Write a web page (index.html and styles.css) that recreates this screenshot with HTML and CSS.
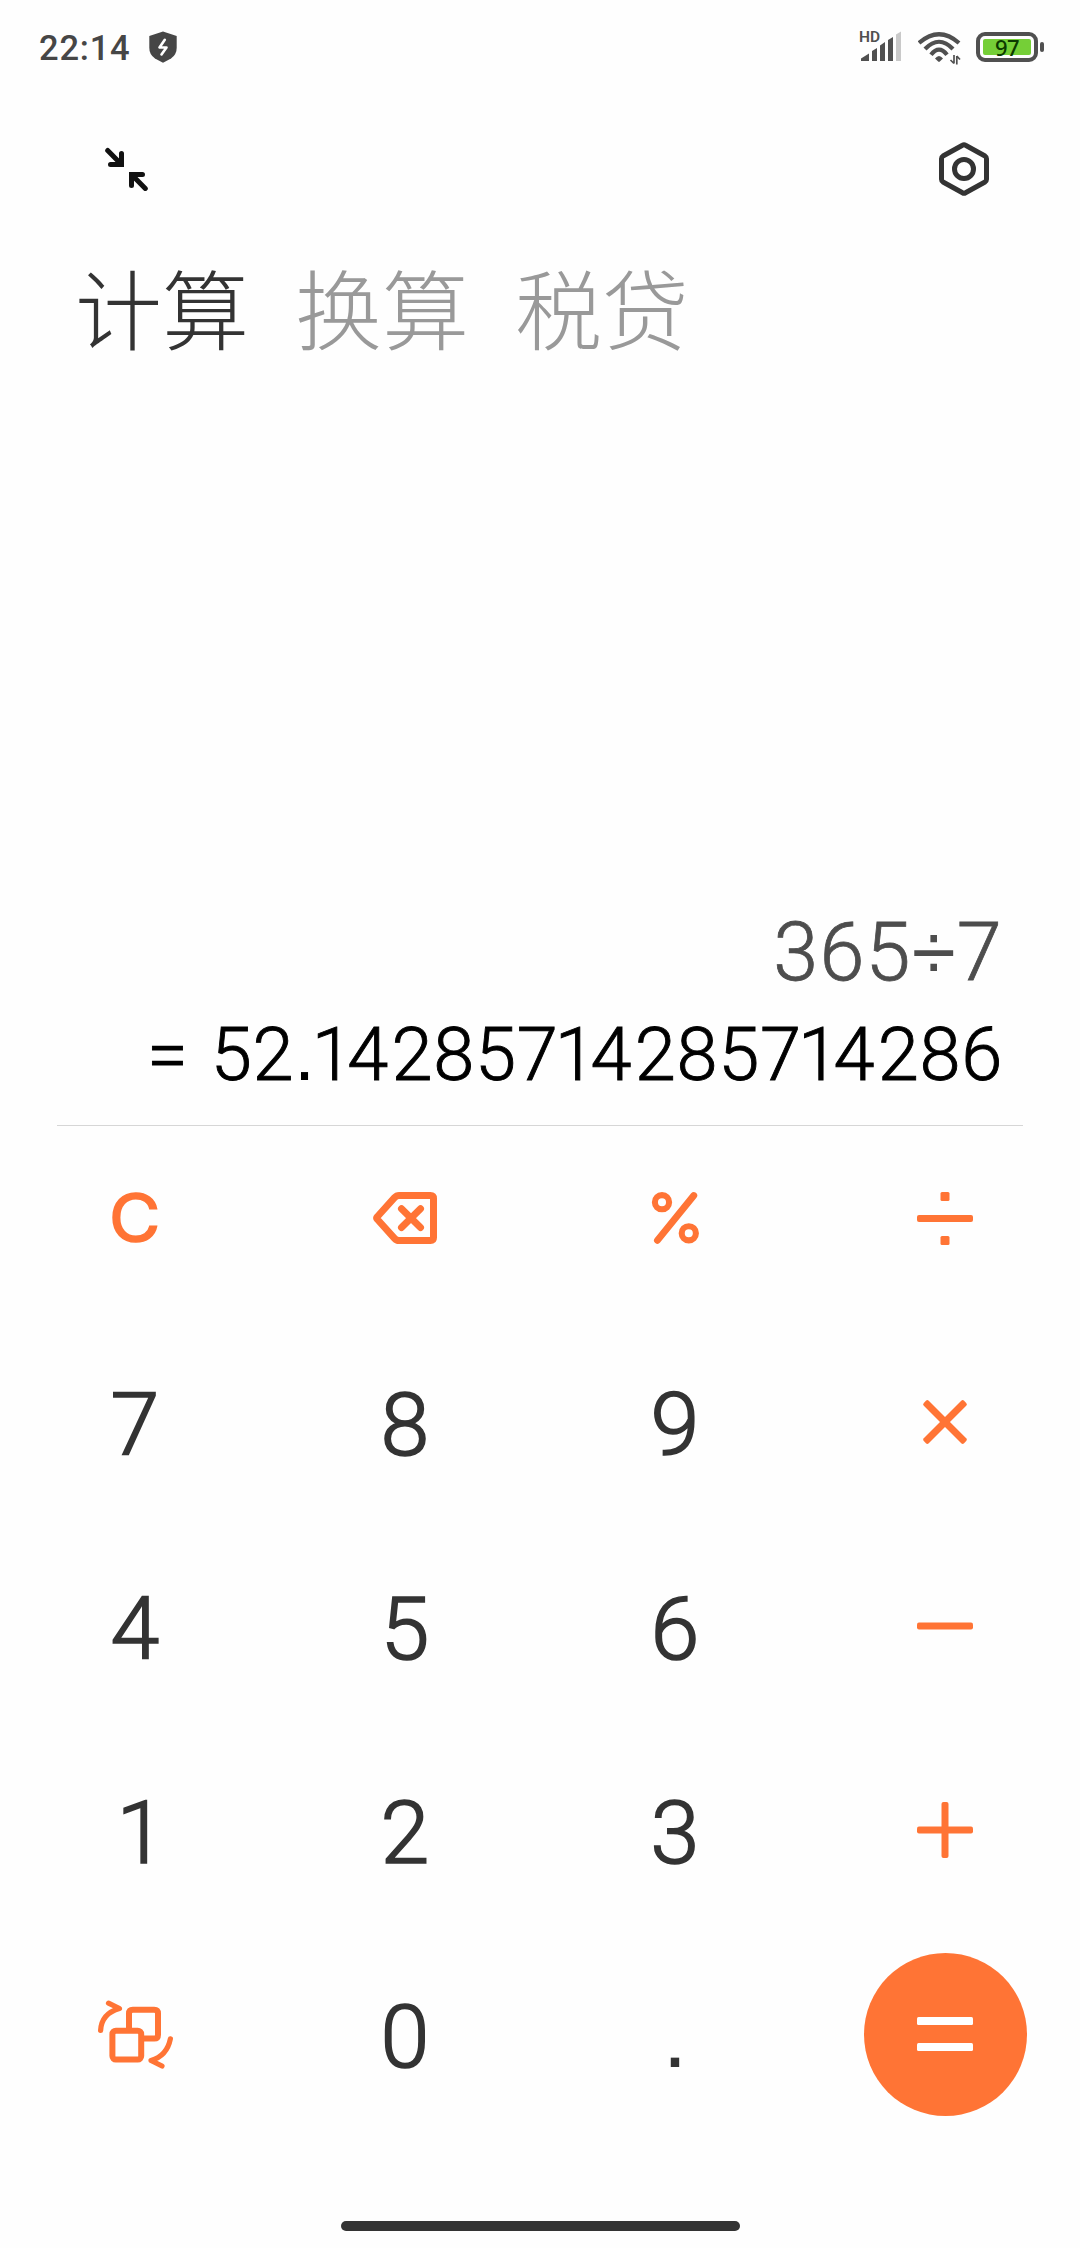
FILE: index.html
```html
<!DOCTYPE html>
<html lang="zh-CN">
<head>
<meta charset="utf-8">
<title>计算器</title>
<link rel="stylesheet" href="styles.css">
</head>
<body>
<div class="screen">
  <header class="status">
    <div class="status-left">
      <span class="clock">22:14</span>
      <svg class="shield" width="28" height="32" viewBox="149 31 28 32">
        <path d="M163 31.5 L176.7 36 V48 Q176.7 54.5 171 58.5 L163 62.7 L155 58.5 Q149.3 54.5 149.3 48 V36 Z" fill="#464646"/>
        <path d="M164.8 39.8 L159.5 47.5 H166.5 L161.5 54.5" fill="none" stroke="#fff" stroke-width="2.6" stroke-linejoin="round" stroke-linecap="round"/>
      </svg>
    </div>
    <div class="status-right">
      <div class="signal">
        <span class="hd">HD</span>
        <svg width="42" height="31" viewBox="861 31 42 31">
          <path d="M862 61 V58.5 L870 53.5 V61Z M873 61 V51 L878 48 V61Z M881 61 V45.5 L886 42 V61Z M889 61 V40 L894 37 V61Z" fill="#505050"/>
          <path d="M897 61 V34.5 L902 31.5 V61Z" fill="#c9c9c9"/>
        </svg>
      </div>
      <svg class="wifi" width="43" height="34" viewBox="918 31 43 34">
        <g fill="none" stroke="#505050" stroke-width="4.2">
          <path d="M919 43 Q939 25.5 959 43"/>
          <path d="M925 49 Q939 34.5 953 49"/>
          <path d="M931 54.7 Q939 44.5 947 54.7"/>
        </g>
        <path d="M935 58.5 Q939 53.5 943 58.5 L939.8 61.6 Q939 62.2 938.2 61.6Z" fill="#505050"/>
        <path d="M954 55 V63.5 M954 63.5 L950.5 60 M956.8 64.5 V56 M956.8 56 L960 59.5" fill="none" stroke="#505050" stroke-width="1.7"/>
      </svg>
      <div class="battery"><span class="level">97</span></div>
      <i class="nub"></i>
    </div>
  </header>

  <div class="toolbar">
    <svg width="44" height="44" viewBox="104 146 44 44" fill="none" stroke="#111" stroke-width="5" stroke-linecap="round">
      <path d="M107.7 149.5 L121 163 M121.5 152.5 V163.5 H110.5"/>
      <path d="M145.3 187.5 L132 174 M131.5 184.5 V173.5 H142.5"/>
    </svg>
    <svg width="54" height="58" viewBox="937 140 54 58" fill="none" stroke="#333" stroke-width="5" stroke-linejoin="round">
      <path d="M962.5 145.2 Q964 144.3 965.5 145.2 L985 156 Q986.5 157 986.5 158.7 V179.3 Q986.5 181 985 182 L965.5 192.8 Q964 193.7 962.5 192.8 L943 182 Q941.5 181 941.5 179.3 V158.7 Q941.5 157 943 156 Z"/>
      <circle cx="964" cy="169" r="9.5"/>
    </svg>
  </div>

  <nav class="tabs">
    <span class="tab active">计算</span>
    <span class="tab">换算</span>
    <span class="tab">税贷</span>
  </nav>

  <section class="display">
    <div class="expression">365<span class="divide">÷</span>7</div>
    <div class="result"><span class="sign">= </span>52<span class="point">.</span><span class="one">1</span><span class="four">4</span>285<span class="seven">7</span><span class="one">1</span><span class="four">4</span>285<span class="seven">7</span><span class="one">1</span><span class="four">4</span>286</div>
  </section>

  <main class="keypad">
    <div class="key clear"><span class="clear-label">C</span></div>
    <div class="key">
      <svg class="backspace" width="66" height="54" viewBox="372 1191 66 54" fill="none" stroke="#ff7435" stroke-width="7" stroke-linejoin="round" stroke-linecap="round">
        <path d="M399 1195.5 H430.5 Q433.5 1195.5 433.5 1198.5 V1237.5 Q433.5 1240.5 430.5 1240.5 H399 Q396.5 1240.5 394.5 1238.3 L377.5 1219.5 Q376 1218 377.5 1216.5 L394.5 1197.7 Q396.5 1195.5 399 1195.5Z"/>
        <path d="M401.5 1208.7 L420.5 1227.5 M420.5 1208.7 L401.5 1227.5"/>
      </svg>
    </div>
    <div class="key">
      <svg width="50" height="54" viewBox="650 1191 50 54" fill="none" stroke="#ff7435">
        <circle cx="662" cy="1202.2" r="7.1" stroke-width="6.1"/>
        <circle cx="688.8" cy="1233.3" r="7.1" stroke-width="6.1"/>
        <path d="M693.8 1195.5 L657.4 1240.3" stroke-width="6.8" stroke-linecap="round"/>
      </svg>
    </div>
    <div class="key">
      <svg width="56" height="56" viewBox="0 0 56 56" fill="#ff7435">
        <rect x="23.5" y="2" width="9" height="9" rx="1.5"/>
        <rect x="0" y="25" width="56" height="7" rx="2"/>
        <rect x="23.5" y="46" width="9" height="9" rx="1.5"/>
      </svg>
    </div>

    <div class="key digit">7</div>
    <div class="key digit">8</div>
    <div class="key digit">9</div>
    <div class="key">
      <svg width="56" height="56" viewBox="-28 -28 56 56" fill="#ff7435">
        <rect x="-28.5" y="-3.5" width="57" height="7" rx="2" transform="rotate(45)"/>
        <rect x="-28.5" y="-3.5" width="57" height="7" rx="2" transform="rotate(-45)"/>
      </svg>
    </div>

    <div class="key digit">4</div>
    <div class="key digit">5</div>
    <div class="key digit">6</div>
    <div class="key">
      <svg width="56" height="56" viewBox="0 0 56 56" fill="#ff7435"><rect x="0" y="24.5" width="56" height="7" rx="2"/></svg>
    </div>

    <div class="key digit narrow">1</div>
    <div class="key digit">2</div>
    <div class="key digit">3</div>
    <div class="key">
      <svg width="56" height="56" viewBox="0 0 56 56" fill="#ff7435">
        <rect x="0" y="24.5" width="56" height="7" rx="2"/>
        <rect x="24.5" y="0" width="7" height="56" rx="2"/>
      </svg>
    </div>

    <div class="key">
      <svg width="80" height="72" viewBox="95 1998 80 72" fill="none" stroke="#ff7435" stroke-width="6" stroke-linecap="round" stroke-linejoin="round">
        <rect x="112.4" y="2030.7" width="28.8" height="28.9" rx="3.5"/>
        <path d="M129 2029 V2013.5 Q129 2009.7 132.8 2009.7 H154.2 Q158 2009.7 158 2013.5 V2034.7 Q158 2038.6 154.2 2038.6 H143"/>
        <path stroke-width="5.2" d="M100.6 2030.5 Q101.5 2013.5 119.5 2008.5 L108.5 2003.2"/>
        <path stroke-width="5.2" d="M170.4 2038.8 Q167 2056 151 2060.5 L162 2066"/>
      </svg>
    </div>
    <div class="key digit">0</div>
    <div class="key digit"><span class="point">.</span></div>
    <div class="key">
      <div class="equals">
        <svg width="56" height="56" viewBox="0 0 56 56" fill="#fff">
          <rect x="0" y="11" width="56" height="8" rx="1.5"/>
          <rect x="0" y="37" width="56" height="8" rx="1.5"/>
        </svg>
      </div>
    </div>
  </main>

  <footer class="gesture"><i class="pill"></i></footer>
</div>
</body>
</html>
```
FILE: styles.css
```css
* { box-sizing: border-box; }

body {
  margin: 0;
  background: #fefefe;
  font-family: Roboto, "Noto Sans CJK SC", sans-serif;
  color: #333;
}

svg { display: block; flex: none; }

.screen {
  width: 1080px;
  height: 2248px;
  display: flex;
  flex-direction: column;
  overflow: hidden;
}

.status {
  height: 94px;
  display: flex;
  justify-content: space-between;
  align-items: center;
  padding: 0 36px 0 39px;
}

.status-left, .status-right { display: flex; align-items: center; }

.clock {
  width: 110px;
  font-size: 34.5px;
  line-height: 40px;
  font-weight: 500;
  letter-spacing: .8px;
  color: #464646;
  padding-top: 2px;
}

.signal { position: relative; margin: 0 16px 2px 0; }

.hd {
  position: absolute;
  left: -1px;
  top: -3px;
  font-size: 15.5px;
  line-height: 18px;
  font-weight: 600;
  color: #505050;
}

.wifi { margin: 2px 15px 0 0; }

.battery {
  width: 62px;
  height: 30px;
  border: 4px solid #505050;
  border-radius: 9px;
  padding: 3px;
  display: flex;
}

.level {
  flex: 1;
  background: #75cf37;
  border-radius: 2px;
  color: #0c3a00;
  font: 500 22px/17px "Noto Sans", sans-serif;
  letter-spacing: -.5px;
  text-align: center;
}

.nub {
  width: 4px;
  height: 10px;
  margin-left: 2px;
  border-radius: 2px;
  background: #505050;
}

.toolbar {
  height: 150px;
  display: flex;
  justify-content: space-between;
  align-items: center;
  padding: 0 89px 0 104px;
}

.tabs {
  display: flex;
  gap: 46px;
  height: 124px;
  padding-left: 75px;
  align-items: center;
}

.tab {
  width: 174px;
  font: 300 87px/124px "Noto Sans CJK SC", sans-serif;
  color: #999;
  white-space: nowrap;
}

.tab.active { color: #333; }

.display {
  flex: 1;
  margin: 0 57px;
  padding: 0 20px 18px 0;
  display: flex;
  flex-direction: column;
  justify-content: flex-end;
  align-items: flex-end;
  border-bottom: 1px solid #d6d6d6;
  white-space: nowrap;
}

.expression {
  font-size: 81px;
  line-height: 100px;
  font-weight: 300;
  letter-spacing: 1.2px;
  color: #4d4d4d;
  -webkit-text-stroke: .8px #4d4d4d;
}

.divide {
  font: 400 80px/1 "Liberation Sans", sans-serif;
  -webkit-text-stroke: 0;
}

.result {
  font-size: 74px;
  line-height: 104px;
  font-weight: 300;
  letter-spacing: .7px;
  color: #000;
  -webkit-text-stroke: .9px #000;
}

.sign { letter-spacing: 2.4px; }

/* The figure 1 sits tighter than its tabular cell, the 4 a little wider. */
.seven { letter-spacing: -3px; }
.one { letter-spacing: -5.5px; }
.four { letter-spacing: 3.2px; }

.point {
  font-family: "Liberation Sans", sans-serif;
  font-weight: 400;
  line-height: 1;
  -webkit-text-stroke: 0;
}

.result .point { letter-spacing: -3px; }

.keypad {
  height: 1000px;
  display: grid;
  grid-template-columns: repeat(4, 270px);
  grid-template-rows: repeat(5, 184px);
  row-gap: 20px;
}

.key {
  display: flex;
  align-items: center;
  justify-content: center;
}

.digit {
  padding-top: 6px;
  font-size: 88px;
  line-height: 178px;
  font-weight: 300;
  -webkit-text-stroke: 1.7px #333;
}

.digit .point { line-height: 178px; }

.narrow { padding-left: 12px; }

.clear {
  font: 400 65px/184px Inter, sans-serif;
  color: #ff7435;
  -webkit-text-stroke: 1.6px #ff7435;
}

.clear-label { transform: scaleX(1.08); }

.equals {
  width: 163px;
  height: 163px;
  border-radius: 50%;
  background: #ff7435;
  display: flex;
  align-items: center;
  justify-content: center;
}

.gesture {
  height: 122px;
  display: flex;
  justify-content: center;
  align-items: flex-end;
  padding-bottom: 17px;
}

.pill {
  width: 399px;
  height: 10px;
  border-radius: 5px;
  background: #333;
}
```
